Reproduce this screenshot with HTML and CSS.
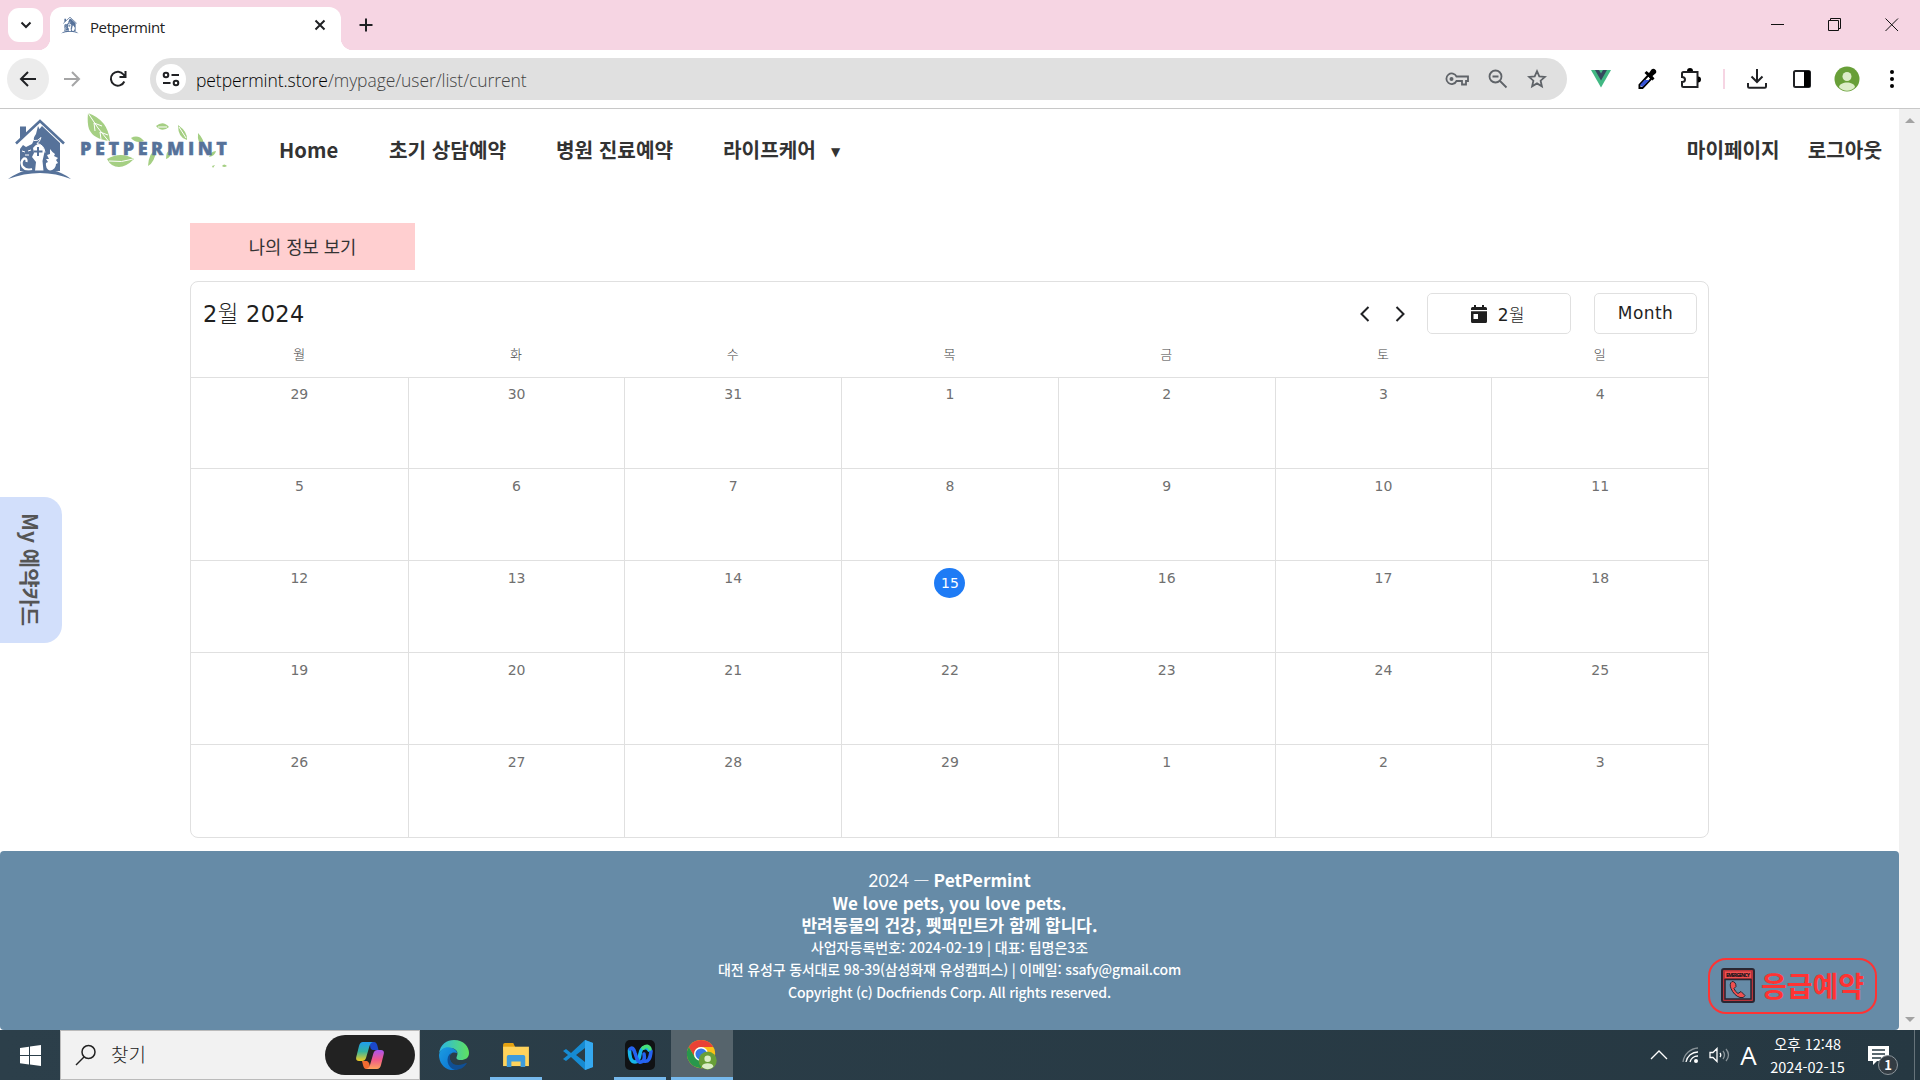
FILE: index.html
```html
<!DOCTYPE html>
<html lang="ko">
<head>
<meta charset="utf-8">
<title>Petpermint</title>
<link rel="stylesheet" href="styles.css">
</head>
<body>
<div class="screen">
  <header class="tabstrip">
    <div class="tab-search"><svg width="12" height="8" viewBox="0 0 12 8"><path d="M1.5 1.5 6 6l4.500-4.500" class="ink"/></svg></div>
    <div class="tab">
      <svg class="favicon" viewBox="0 0 64 62"><use href="#house"/></svg>
      <span class="tab-title">Petpermint</span>
      <svg class="tab-close" width="12" height="12" viewBox="0 0 12 12"><path d="m1.500 1.500 9 9m0-9-9 9" class="ink"/></svg>
    </div>
    <svg class="tab-new" width="14" height="14" viewBox="0 0 14 14"><path d="M7 .5v13M.5 7h13" class="ink"/></svg>
    <div class="window-buttons">
      <svg width="14" height="14" viewBox="0 0 14 14"><path d="M0 6.500h13" class="thin"/></svg>
      <svg width="14" height="14" viewBox="0 0 14 14"><path d="M.5 2.500h10v10H.5zM2.500 2.500v-2h10v10h-2" class="thin"/></svg>
      <svg width="14" height="14" viewBox="0 0 14 14"><path d="m.5.5 12.500 12.500m0-12.500L.5 13" class="thin"/></svg>
    </div>
  </header>

  <div class="toolbar">
    <div class="back"><svg width="18" height="18" viewBox="0 0 18 18"><path d="M17 9H2.500M9 2 2 9l7 7" class="ink"/></svg></div>
    <svg class="forward" width="18" height="18" viewBox="0 0 18 18"><path d="M1 9h14.500M9 2l7 7-7 7" class="ink"/></svg>
    <svg class="reload" width="18" height="18" viewBox="0 0 18 18"><path d="M15.300 11.500A7 7 0 1 1 14.500 4.500L16 6.500M16.500 1v6h-6" class="ink"/></svg>
    <div class="omnibox">
      <div class="site-info"><svg width="18" height="16" viewBox="0 0 18 16"><path d="M9.500 4H17M1 12h7.500" class="ink"/><circle cx="4" cy="4" r="2.300" class="ink"/><circle cx="14" cy="12" r="2.300" class="ink"/></svg></div>
      <span class="url"><span class="host">petpermint.store</span>/mypage/user/list/current</span>
      <div class="omni-icons">
        <svg width="24" height="16" viewBox="0 0 24 16"><path d="M11.500 5.500H23V10h-2v3.500h-4V10h-5.500a5.300 5.300 0 1 1 0-4.500Z" class="grey"/><circle cx="6.500" cy="8" r="2" fill="#5f6368"/></svg>
        <svg width="20" height="20" viewBox="0 0 20 20"><circle cx="7.500" cy="7.500" r="6" class="grey"/><path d="m12 12 6.500 6.500M4.500 7.500h6" class="grey"/></svg>
        <svg width="20" height="20" viewBox="0 0 20 20"><path d="m10 2.200 2.300 5.200 5.600.5-4.300 3.800 1.300 5.600L10 14.400l-4.900 2.900 1.300-5.600-4.300-3.800 5.600-.5Z" class="grey"/></svg>
      </div>
    </div>
    <svg class="vue" width="20" height="18" viewBox="0 0 20 18"><path d="M0 0h20L10 17.500Z" fill="#41b883"/><path d="M4 0h4l2 3.500L12 0h4l-6 10.500Z" fill="#35495e"/></svg>
    <svg class="dropper" width="20" height="22" viewBox="0 0 20 22"><path d="M2.500 17v3h3l9-9.500-3-3.500Z" fill="#fff" stroke="#000" stroke-width="2"/><path d="m3.500 16.500 4-4.500h5L6 18.500H3.500Z" fill="#3654d8"/><path d="m7.500 5 2-2 2.500 2 2.500-3.500C17-1 21 3 18.500 5.500L15.500 8l2 2.500-2 2Z"/></svg>
    <svg class="puzzle" width="22" height="22" viewBox="0 0 22 22"><path d="M3.500 4h14v15h-14q-1.500 0-1.500-1.500V14q3 0 3-2.500T2 9V5.500Q2 4 3.500 4Z" class="ink"/><path d="M7 3a3 3 0 0 1 6 0ZM18 8.500a3 3 0 0 1 0 6Z"/></svg>
    <span class="divider"></span>
    <svg class="download" width="20" height="20" viewBox="0 0 20 20"><path d="M10 0v12M4.500 7.500 10 13l5.500-5.500M1 14v3.500q0 1.200 1.200 1.200h15.600q1.200 0 1.200-1.200V14" class="ink"/></svg>
    <svg class="panel" width="18" height="18" viewBox="0 0 18 18"><rect x="1" y="1" width="16" height="16" rx="1.500" class="ink"/><path d="M11 1h6v16h-6z"/></svg>
    <svg class="avatar" width="26" height="26" viewBox="0 0 26 26"><use href="#person"/></svg>
    <svg class="more" width="4" height="20" viewBox="0 0 4 20"><circle cx="2" cy="3" r="2"/><circle cx="2" cy="10" r="2"/><circle cx="2" cy="17" r="2"/></svg>
  </div>

  <div class="viewport">
    <div class="page">
      <nav class="nav">
        <svg class="logo" width="224" height="72" viewBox="0 0 224 72">
          <defs>
            <symbol id="house" viewBox="0 0 64 62">
              <path d="M12 8.500h6V16l-6 5Z" fill="#56729a"/>
              <path d="M8 25.500 32 3l24 22.500" fill="none" stroke="#56729a" stroke-width="2.600"/>
              <path d="m30 8 1.500 3L34 8l18 17v28H12V31l3-4 3 2 6-3 2-4q-1-2 2-6Z" fill="#56729a"/>
              <path d="M25 30q2-3 5-4 6 1 6.500 8l-2 9 1 10H27l1-9-4-5 2-4Z" fill="#fff"/>
              <path d="M26 22.500q4 1 7-3-1 4-4 6 7 1 8 9" fill="none" stroke="#fff"/>
              <path d="M18.500 44q.5-4-2.500-3.500-4 3-1.500 8Q18 53 24 51" fill="none" stroke="#fff" stroke-width="2.200"/>
              <path d="m14 33 3 1m3-1 3-1m-6 5h4" fill="none" stroke="#fff"/>
              <path d="M42 31q2 3 5 5l-1 2 4 2-2 2 2 3-2 1q0 5-6 7-5-3-4-8l2-1-2-3h3l-2-4 3-1Z" fill="#fff"/>
              <path d="M30 29v9m-4.500-4.500h9" fill="none" stroke="#56729a" stroke-width="2"/>
              <path d="M0 61q10-7 18-8.500h27Q54 54 63 61q-15-6-31-6T0 61Z" fill="#56729a"/>
            </symbol>
            <symbol id="person" viewBox="0 0 26 26">
              <circle cx="13" cy="13" r="12.500" fill="#689f38"/><circle cx="13" cy="10.500" r="4.500" fill="#dcedc8"/><path d="M5 21c1-6 15-6 16 0-4 5-12 5-16 0Z" fill="#dcedc8"/>
            </symbol>
          </defs>
          <use href="#house" x="6" y="6" width="64" height="62"/>
          <g transform="translate(-2 -1)">
          <g fill="#a5cf83"><path d="M88 2q20 7 22 28-17-2-21-12-2-6-1-16ZM107 48q14-8 27 0-8 8-15 8-8 0-12-8ZM156 15q7-6 13 1-7 6-13-1ZM178 14q10 7 9 15-9-2-9-15ZM198 22q7 7 5 13-6-3-5-13ZM131 27q7-4 13 3-8 3-13-3ZM148 55q1-14 8-16-1 12-8 16ZM166 48q0-8 5-10 1 8-5 10ZM209 46q2-6 7-6-1 5-7 6ZM222 55q2-3 5 0-3 2-5 0ZM212 55l3-1-2 3Z"/></g>
          <path d="M88 2q9 15 22 30M94 12l1 8m-1-8 8 3m-2 6 1 7m-1-7 8 3M109 50q13 2 24-2M158 16h9M179 16l7 11" fill="none" stroke="#fff"/>
          </g>
          <text x="78" y="43" textLength="147" class="wordmark">PETPERMINT</text>
        </svg>
        <ul class="menu">
          <li class="w-home">Home</li><li class="w-first">초기 상담예약</li><li class="w-visit">병원 진료예약</li><li class="w-life">라이프케어</li><li class="caret">▼</li>
        </ul>
        <ul class="account"><li class="w-my">마이페이지</li><li class="w-out">로그아웃</li></ul>
      </nav>

      <main class="content">
        <button class="info-button">나의 정보 보기</button>
        <section class="calendar">
          <div class="cal-header">
            <h1>2<span class="ko">월</span> 2024</h1>
            <svg class="prev" width="10" height="16" viewBox="0 0 10 16"><path d="M8.500 1 1.500 8l7 7" class="ink"/></svg>
            <svg class="next" width="10" height="16" viewBox="0 0 10 16"><path d="m1.500 1 7 7-7 7" class="ink"/></svg>
            <button class="period"><svg width="16" height="18" viewBox="0 0 16 18"><path d="M3 0h2v2h6V0h2v2h1.500Q16 2 16 3.500V5H0V3.500Q0 2 1.500 2H3ZM0 6.200h16v10.300q0 1.500-1.500 1.500h-13Q0 18 0 16.500ZM2.500 9v5h4.500V9Z" fill="#1f1f1f" fill-rule="evenodd"/></svg><span>2<span class="ko">월</span></span></button>
            <button class="mode">Month</button>
          </div>
          <div class="weekdays"><span>월</span><span>화</span><span>수</span><span>목</span><span>금</span><span>토</span><span>일</span></div>
          <div class="days">
            <div>29</div><div>30</div><div>31</div><div>1</div><div>2</div><div>3</div><div>4</div>
            <div>5</div><div>6</div><div>7</div><div>8</div><div>9</div><div>10</div><div>11</div>
            <div>12</div><div>13</div><div>14</div><div><span class="today">15</span></div><div>16</div><div>17</div><div>18</div>
            <div>19</div><div>20</div><div>21</div><div>22</div><div>23</div><div>24</div><div>25</div>
            <div>26</div><div>27</div><div>28</div><div>29</div><div>1</div><div>2</div><div>3</div>
          </div>
        </section>
      </main>

      <footer class="footer">
        <p class="f-brand">2024 <span class="dash">—</span> <strong>PetPermint</strong></p>
        <p class="f-love">We love pets, you love pets.</p>
        <p class="f-slogan">반려동물의 건강, 펫퍼민트가 함께 합니다.</p>
        <p class="f-reg">사업자등록번호: 2024-02-19 | 대표: 팀명은3조</p>
        <p class="f-addr">대전 유성구 동서대로 98-39(삼성화재 유성캠퍼스) | 이메일: ssafy@gmail.com</p>
        <p class="f-copy">Copyright (c) Docfriends Corp. All rights reserved.</p>
      </footer>
      <aside class="card-tab"><span>My 예약카드</span></aside>
      <button class="emergency">
        <svg width="34" height="35" viewBox="0 0 34 35"><rect x="1" y="1" width="32" height="33" rx="2" fill="#b9343b" stroke="#2a2632" stroke-width="2"/><path d="M4 11.500h26V31H4z" fill="#668ba7" stroke="#2a2632" stroke-width="1.500"/><path d="M4 3.500h26v6.500H4z" fill="#f0504f"/><text x="5" y="9" textLength="24" class="sign">EMERGENCY</text><path d="M11 13.500q-3 2-1 7 3 7 9 9 4 1 5-2l-4-4-3 2q-3-2-4-5l2-2q0-5-4-5Z" fill="#f0504f" stroke="#2a2632"/></svg>
        <span>응급예약</span>
      </button>
    </div>
    <div class="scrollbar"><svg width="10" height="5" viewBox="0 0 10 5"><path d="m0 5 5-5 5 5Z" fill="#a3a3a3"/></svg><svg width="10" height="5" viewBox="0 0 10 5"><path d="m0 0 5 5 5-5Z" fill="#a3a3a3"/></svg></div>
  </div>

  <div class="taskbar">
    <div class="start"><svg width="21" height="21" viewBox="0 0 21 21"><path d="m0 3 9-1.300V10H0Zm10-1.500L21 0v10H10ZM0 11h9v8.500L0 18.200Zm10 0h11v10l-11-1.400Z" fill="#fff"/></svg></div>
    <div class="search"><svg width="22" height="22" viewBox="0 0 22 22"><circle cx="13.500" cy="8" r="6.500" class="glass"/><path d="m9 13-8 8" class="glass"/></svg><span>찾기</span>
      <div class="copilot"><svg width="28" height="27" viewBox="0 0 28 27"><defs><linearGradient id="cpa" x2="0" y2="1"><stop stop-color="#1f9df0"/><stop offset=".5" stop-color="#35b3a0"/><stop offset="1" stop-color="#f3cc20"/></linearGradient><linearGradient id="cpb" x2="0" y2="1"><stop stop-color="#a955f2"/><stop offset=".5" stop-color="#f0588c"/><stop offset="1" stop-color="#ffa35c"/></linearGradient></defs><path d="M14 0h4q2.500 0 3.500 4l1 4h-6q-3-1-2.500-8Z" fill="#1b48c9"/><path d="M7 0h10q-2.500.5-3.500 4L10 16q-1 3-4 3H3q-4 0-2.500-5L3 4q1-4 4-4Z" fill="url(#cpa)"/><path d="M14 27h-4q-2 0-3-4l-1-4h5q3 1 3 8Z" fill="#f16b31"/><path d="M21 27H10q3-.5 4-4l3.500-12q1-3 4-3H25q4 0 2.500 5L25 23q-1 4-4 4Z" fill="url(#cpb)"/></svg></div>
    </div>
    <div class="apps">
    <div class="app"><svg width="30" height="30" viewBox="0 0 30 30"><defs><linearGradient id="ea"><stop stop-color="#2ab5e8"/><stop offset="1" stop-color="#5fe35f"/></linearGradient><linearGradient id="eb" x2="1" y2="1"><stop stop-color="#1b9de2"/><stop offset="1" stop-color="#0a6fd0"/></linearGradient></defs><path d="M0 14C1 4 8 0 15 0c10 0 15 7 15 13 0 5-4 7-8 7-5 0-5-2-4-4 2-5-2-8-7-8C5 8 1 10 0 14Z" fill="url(#ea)"/><path d="M0 15C1 8 8 6 13 8c3 1 5 3 5 5-5-2-9 2-7 7 2 6 8 7 7 10C7 32 0 24 0 15Z" fill="url(#eb)"/><path d="M12 13c-3 6 0 12 7 12 4 0 7-2 9-2-3 5-8 7-12 7-8-2-10-13-4-17Z" fill="#104f94"/></svg></div>
    <div class="app open"><svg width="28" height="24" viewBox="0 0 30 26"><path d="M1 2q0-2 2-2h9l2 4v4H1Z" fill="#e5a211"/><path d="M1 4h28v21H1Z" fill="#ffd35c"/><path d="M5 15q0-2 2-2h16q2 0 2 2v11h-5v-6H10v6H5Z" fill="#3d9bdc"/></svg></div>
    <div class="app"><svg width="30" height="30" viewBox="0 0 30 30"><path d="m22 0 8 3v24l-8 3L8 17l-5 4-3-2 5-4-5-4 3-2 5 4Zm0 8-9 7 9 7Z" fill="#168bd2"/><path d="m22 0 8 3v24l-8 3Z" fill="#35a9f0"/></svg></div>
    <div class="app open"><svg width="30" height="30" viewBox="0 0 30 30"><rect width="30" height="30" rx="5" fill="#101214"/><g fill="none" stroke-width="3.600" stroke-linecap="round"><path d="M4.500 10q0 12 5.500 12 4 0 5-8 1-6 4-6 3-1 5 2" stroke="#17b6e8"/><path d="M5 9q3-3 5 4l2 6q2 5 6 2 2-2 1-7" stroke="#2563f0"/><path d="M19 21q6 2 7-10" stroke="#2563f0"/><path d="M18 8q5-4 7 1" stroke="#46e07a"/></g></svg></div>
    <div class="app open active"><svg width="32" height="32" viewBox="0 0 34 34"><circle cx="16" cy="16" r="15" fill="#fbc116"/><path d="M3 8.500A15 15 0 0 1 29 8.500H16a7.500 7.500 0 0 0-6.500 11.200Z" fill="#e94235"/><path d="M3 8.500A15 15 0 0 0 16 31l6-11.500H9.500Z" fill="#28974c"/><circle cx="16" cy="16" r="7.500" fill="#fff"/><circle cx="16" cy="16" r="6" fill="#3478e5"/><use href="#person" x="13" y="13" width="20" height="20"/></svg></div>
    </div>
    <div class="tray">
      <svg class="t-up" width="18" height="10" viewBox="0 0 18 10"><path d="m1 9 8-8 8 8" class="white"/></svg>
      <svg class="t-wifi" width="18" height="18" viewBox="0 0 18 18"><path d="M1 16A16 16 0 0 1 16 2" class="white dim"/><path d="M4 16A12 12 0 0 1 16 6M8 16a8 8 0 0 1 8-6" class="white"/><circle cx="14" cy="15" r="2" fill="#fff"/></svg>
      <svg class="t-sound" width="22" height="16" viewBox="0 0 22 16"><path d="M1 5.500h3l4-4v13l-4-4H1ZM11 6q1.500 2 0 4" class="white"/><path d="M14 4q3 4 0 8M17 2q5 6 0 12" class="white dim"/></svg>
      <span class="ime">A</span>
      <div class="clock"><span>오후 12:48</span><span>2024-02-15</span></div>
      <div class="notice"><svg width="21" height="19" viewBox="0 0 21 19"><path d="M0 0h21v15H9l-4 4v-4H0Z" fill="#fff"/><path d="M4 4h13M4 8h13M4 12h9" stroke="#263842" stroke-width="1.300"/></svg><span class="badge">1</span></div>
      <span class="peek"></span>
    </div>
  </div>
</div>
</body>
</html>
```
FILE: styles.css
```css
* { box-sizing: border-box; }
body { margin: 0; font-family: "Noto Sans CJK KR", sans-serif; color: #333; }
p, h1, ul { margin: 0; padding: 0; }
ul { list-style: none; display: flex; }
button { font: inherit; color: inherit; padding: 0; }
svg { display: block; flex: none; }
.screen { width: 1920px; height: 1080px; overflow: hidden; display: flex; flex-direction: column; background: #fff; }
.ink { fill: none; stroke: #202124; stroke-width: 2; }
.thin { fill: none; stroke: #111; stroke-width: 1; }
.grey { fill: none; stroke: #5f6368; stroke-width: 1.800; }
.white { fill: none; stroke: #fff; stroke-width: 1.300; }
.dim { opacity: .45; }
.glass { fill: none; stroke: #222; stroke-width: 1.500; }

.tabstrip { height: 50px; flex: none; background: #f6d5e3; display: flex; padding: 7px 21px 0 8px; }
.tab-search { width: 35px; height: 34px; margin-top: 1px; border-radius: 11px; background: #fff; display: flex; align-items: center; justify-content: center; }
.tab { width: 291px; margin-left: 7px; background: #fff; border-radius: 12px 12px 0 0; display: flex; align-items: center; padding: 0 15px 7px 11px; position: relative; }
.tab::before, .tab::after { content: ""; position: absolute; bottom: 0; width: 12px; height: 12px; }
.tab::before { left: -12px; background: radial-gradient(circle at 0 0, transparent 12px, #fff 12.500px); }
.tab::after { right: -12px; background: radial-gradient(circle at 100% 0, transparent 12px, #fff 12.500px); }
.favicon { width: 18px; height: 18px; }
.tab-title { margin-left: 11px; padding-top: 3px; font: 15px/20px "Open Sans", sans-serif; letter-spacing: -.4px; flex: 1; color: #222; }
.tab-new { margin: 11px 0 0 18px; }
.window-buttons { margin-left: auto; display: flex; gap: 43px; padding-top: 11px; }

.toolbar { height: 59px; flex: none; background: #fff; border-bottom: 1px solid #c8c8c8; display: flex; align-items: center; padding: 0 26px 0 7px; border-radius: 10px 10px 0 0; }
.back { width: 42px; height: 42px; flex: none; border-radius: 50%; background: #ececec; display: grid; place-items: center; }
.forward { margin-left: 14px; opacity: .4; }
.reload { margin-left: 28px; }
.omnibox { width: 1417px; height: 42px; flex: none; border-radius: 21px; background: #e0e0e0; display: flex; align-items: center; margin-left: 23px; padding: 0 20px 0 6px; }
.site-info { width: 30px; height: 30px; border-radius: 50%; background: #fff; display: grid; place-items: center; }
.url { margin-left: 10px; padding-top: 1px; font: 300 17.500px/24px "Open Sans", sans-serif; color: #444; letter-spacing: -.08px; white-space: nowrap; }
.host { color: #000; }
.omni-icons { margin-left: auto; display: flex; gap: 19px; align-items: center; }
.vue { margin-left: 24px; }
.dropper { margin-left: 26px; }
.puzzle { margin-left: 23px; }
.divider { width: 2px; height: 20px; background: #f6d5e3; margin-left: 21px; }
.download { margin-left: 22px; }
.panel { margin-left: 26px; }
.avatar { margin-left: 23px; }
.more { margin-left: 30px; }

.viewport { height: 921px; flex: none; display: flex; }
.page { width: 1899px; position: relative; display: flex; flex-direction: column; }
.nav { height: 114px; display: flex; align-items: flex-start; flex: none; padding: 3px 17px 0 2px; }
.wordmark { font: 800 18px "Open Sans", sans-serif; fill: #56729a; stroke: #56729a; stroke-width: .4px; }
.logo { overflow: visible; }
.menu, .account { font-size: 20.200px; line-height: 30px; font-weight: 700; white-space: nowrap; padding-top: 23px; }
.menu { margin-left: 53px; }
.account { margin-left: auto; gap: 28px; }
.w-home { width: 110px; }
.w-first, .w-visit { width: 167px; }
.w-life { width: 108px; }
.caret { font: 12px/34px "DejaVu Sans", sans-serif; }

.content { padding-left: 190px; height: 628px; flex: none; }
.info-button { display: block; width: 225px; height: 47px; border: 0; background: #ffcfd0; font-size: 17.700px; padding-bottom: 2px; }
.calendar { margin-top: 11px; width: 1519px; height: 557px; border: 1px solid #e0e0e0; border-radius: 8px; display: flex; flex-direction: column; overflow: hidden; font-family: Verdana, "DejaVu Sans", "Noto Sans CJK KR", sans-serif; }
.cal-header { height: 62px; display: flex; align-items: center; padding: 0 11px 0 12px; color: #1f1f1f; }
.cal-header h1 { font-size: 22.500px; letter-spacing: .3px; font-weight: 400; margin-right: auto; padding-bottom: 2px; }
.ko { font-family: "Noto Sans CJK KR", sans-serif; font-weight: 300; }
.prev, .next { margin-top: 2px; }
.next { margin-left: 25px; margin-right: 22px; }
.period, .mode { height: 41px; border: 1px solid #e0e0e0; border-radius: 5px; background: #fff; font-size: 17px; display: flex; align-items: center; justify-content: center; gap: 11px; }
.period { width: 144px; margin-right: 23px; padding-right: 2px; }
.period span { letter-spacing: .4px; }
.period svg { margin-top: 2px; }
.mode { width: 103px; letter-spacing: .4px; }
.weekdays { height: 33px; display: grid; grid-template-columns: repeat(7, 1fr); text-align: center; font: 300 13px/20px "Noto Sans CJK KR", sans-serif; color: #444; }
.days { flex: 1; display: grid; grid-template-columns: repeat(7, 1fr); grid-template-rows: 91px 92px 92px 92px 1fr; border-top: 1px solid #e0e0e0; }
.days > div { border-left: 1px solid #e0e0e0; border-bottom: 1px solid #e0e0e0; text-align: center; font-size: 14px; line-height: 18px; padding-top: 8px; color: #707070; }
.days > div:nth-child(7n+1) { border-left: 0; }
.days > div:nth-child(n+29) { border-bottom: 0; }
.days > div:nth-child(-n+7) { padding-top: 7px; }
.today { display: block; width: 31px; height: 30px; margin: -1px auto 0; border-radius: 50%; line-height: 30px; background: #1e7bf5; color: #fff; }

.footer { height: 179px; background: #668ba7; border-radius: 4px; color: #fff; text-align: center; padding-top: 18px; white-space: nowrap; }
.footer p { font-size: 14px; line-height: 22.300px; font-weight: 500; }
.footer .f-brand { font: 17.500px/22px Lato, sans-serif; }
.footer .f-love, .footer .f-slogan { font: 700 17px/22px "Noto Sans CJK KR", sans-serif; }
.f-brand strong { font: 700 17.300px/22px "Noto Sans CJK KR", sans-serif; }
.f-brand .dash { font-family: "Noto Sans CJK KR", sans-serif; font-weight: 300; }
.footer .f-addr { letter-spacing: -.15px; }
.footer .f-copy { letter-spacing: -.22px; }
.card-tab { position: absolute; left: 0; top: 388px; width: 62px; height: 146px; border-radius: 0 18px 18px 0; background: #d2dffb; display: grid; place-items: center; }
.card-tab span { writing-mode: vertical-rl; text-orientation: sideways; font-size: 21px; line-height: 30px; font-weight: 700; color: #555; white-space: nowrap; }
.emergency { position: absolute; left: 1708px; top: 849px; width: 169px; height: 56px; border: 2px solid #f33; border-radius: 18px; background: transparent; color: #f33; display: flex; align-items: center; padding: 0 0 2px 11px; gap: 6px; font-size: 28px; font-weight: 700; white-space: nowrap; }
.sign { font: 900 5px "Open Sans", sans-serif; fill: #2a1820; }
.scrollbar { width: 21px; background: #f0f0f0; display: flex; flex-direction: column; justify-content: space-between; align-items: center; padding: 9px 0 8px; }

.taskbar { height: 50px; flex: none; background: linear-gradient(90deg, #2c3f4a, #263842); display: flex; }
.start { width: 60px; display: grid; place-items: center; }
.search { width: 360px; background: #f2f2f2; border: 1px solid #bbb; display: flex; align-items: center; padding: 0 4px 0 14px; font-size: 19px; font-weight: 300; color: #222; }
.search span { margin-left: 14px; padding-bottom: 4px; }
.copilot { width: 90px; height: 40px; border-radius: 20px; background: #222; margin-left: auto; display: grid; place-items: center; }
.apps { display: flex; padding-left: 3px; }
.app { width: 62px; display: grid; place-items: center; border: solid transparent; border-width: 0 5px; }
.app.open { background: linear-gradient(#76b9ed, #76b9ed) bottom / 100% 3px no-repeat padding-box; }
.app.active { border: 0; background: linear-gradient(#76b9ed, #76b9ed) bottom / 100% 3px no-repeat, #56646c; }
.tray { margin-left: auto; display: flex; align-items: center; color: #fff; }
.t-wifi { margin-left: 14px; }
.t-sound { margin-left: 9px; }
.ime { width: 17px; margin-left: 9px; font: 26px/50px "Open Sans", sans-serif; text-align: center; }
.clock { width: 77px; margin-left: 12px; padding-bottom: 1px; display: flex; flex-direction: column; text-align: center; font-size: 14.500px; line-height: 23px; white-space: nowrap; }
.notice { margin-left: 22px; position: relative; }
.badge { position: absolute; left: 10px; top: 9px; width: 20px; height: 20px; border-radius: 50%; border: 1px solid #8b949a; background: #333c43; font-size: 13px; line-height: 18px; text-align: center; font-weight: 700; }
.peek { width: 1px; height: 50px; background: #66737a; margin: 0 5px 0 25px; }
```
